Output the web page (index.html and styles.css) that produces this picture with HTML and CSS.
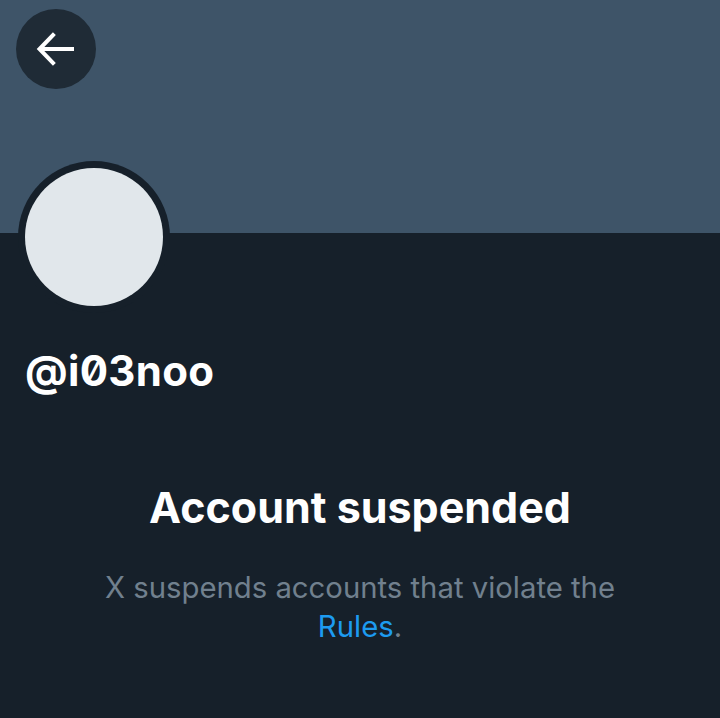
FILE: index.html
```html
<!DOCTYPE html>
<html lang="en">
<head>
<meta charset="utf-8">
<title>@i03noo</title>
<link rel="stylesheet" href="styles.css">
</head>
<body>
<div class="page">
  <header class="banner">
    <button class="back" aria-label="Back">
      <svg viewBox="0 0 40 40" width="40" height="40" aria-hidden="true">
        <path d="M37 20H6M18 6L4.5 20 18 34" fill="none" stroke="#ffffff" stroke-width="4" stroke-linecap="square" stroke-linejoin="miter"/>
      </svg>
    </button>
  </header>
  <section class="profile">
    <div class="avatar-wrap"><div class="avatar"></div></div>
    <h1 class="handle">@i03noo</h1>
  </section>
  <section class="notice">
    <h2 class="title">Account suspended</h2>
    <p class="desc">X suspends accounts that violate the <a href="#" class="link">Rules</a>.</p>
  </section>
</div>
</body>
</html>
```
FILE: styles.css
```css
* { box-sizing: border-box; }
html, body { margin: 0; padding: 0; }
body {
  background: #16202a;
  font-family: Inter, "Noto Sans", "Liberation Sans", sans-serif;
  color: #ffffff;
  width: 720px;
  height: 718px;
  overflow: hidden;
}
.page { display: flex; flex-direction: column; }
.banner {
  height: 233px;
  background: #3e5468;
  padding: 9px 0 0 16px;
}
.back {
  width: 80px;
  height: 80px;
  border-radius: 50%;
  border: 0;
  background: #1f2b36;
  display: flex;
  align-items: center;
  justify-content: center;
  padding: 0;
}
.back svg { display: block; margin-left: -2px; }
.profile {
  padding: 0 0 0 18px;
  margin-top: -72px;
}
.avatar-wrap {
  width: 152px;
  height: 152px;
  border-radius: 50%;
  background: #16202a;
  padding: 7px;
}
.avatar {
  width: 100%;
  height: 100%;
  border-radius: 50%;
  background: #e1e7eb;
}
.handle {
  margin: 33px 0 0 7px;
  font-size: 42px;
  font-weight: 700;
  line-height: 50px;
  letter-spacing: 0.3px;
  font-feature-settings: "zero" 1;
}
.notice {
  margin-top: 86px;
  display: flex;
  flex-direction: column;
  align-items: center;
  text-align: center;
}
.title {
  margin: 0;
  font-size: 43px;
  font-weight: 700;
  line-height: 50px;
}
.desc {
  margin: 36px 0 0;
  width: 560px;
  font-size: 29.3px;
  line-height: 39px;
  color: #71808e;
}
.link { color: #1d9bf0; text-decoration: none; }
```
